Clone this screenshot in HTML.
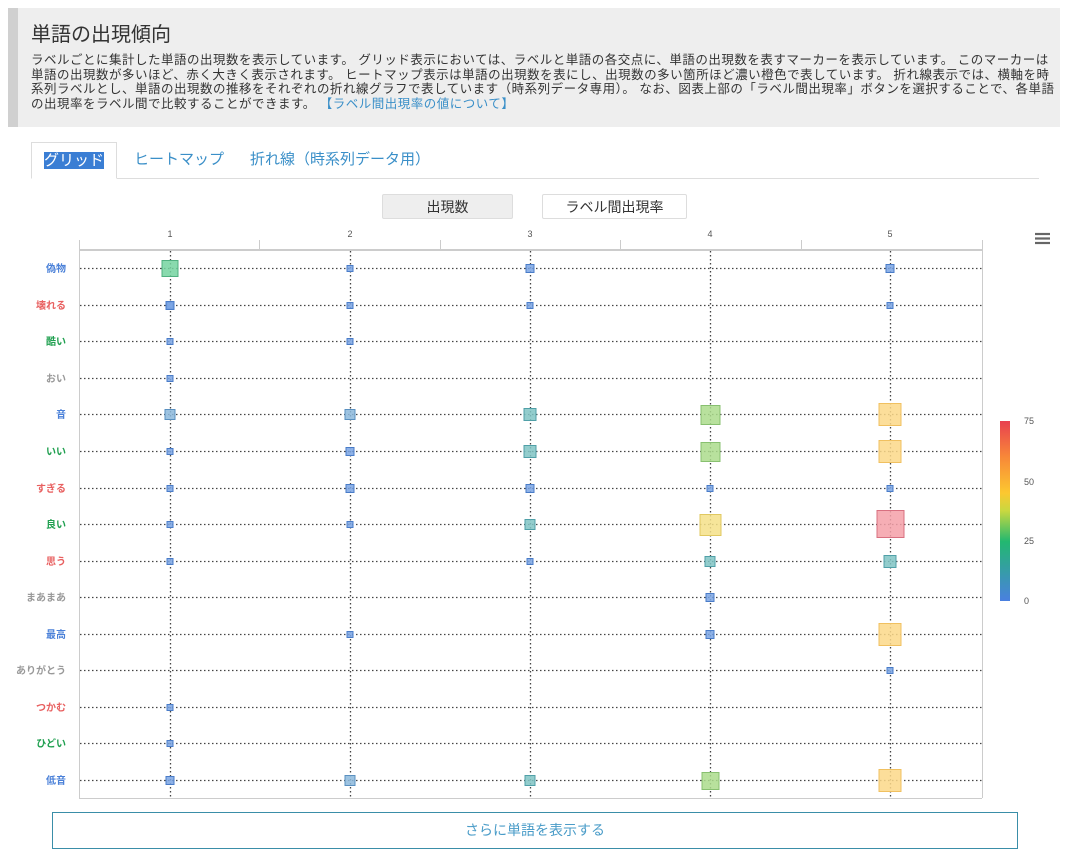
<!DOCTYPE html>
<html><head><meta charset="utf-8"><style>
body{margin:0;background:#fff;font-family:"Liberation Sans","Noto Sans CJK JP",sans-serif;width:1065px;height:861px;overflow:hidden;position:relative}
.hd{position:absolute;left:8px;top:8px;width:1052px;height:119px;background:#eeeeee;border-left:10px solid #d0d0d0;box-sizing:border-box}
.hd h1{margin:0;position:absolute;left:13px;top:10px;font-size:20px;font-weight:normal;color:#333}
.hd p{margin:0;position:absolute;left:13px;top:45px;width:1025px;font-size:12.5px;line-height:14.7px;color:#333;letter-spacing:0.5px}
.hd a{color:#3a8fc8}
.tabline{position:absolute;left:31px;top:178px;width:1008px;border-top:1px solid #ddd}
.tab{position:absolute;top:142px;height:36px;font-size:15px;line-height:36px;color:#3a8fc8}
.tab.on{left:31px;width:86px;border:1px solid #ddd;border-bottom:1px solid #fff;background:#fff;box-sizing:border-box;height:37px;text-align:center}
.tab.on span{background:#3a7ed4;color:#fff}
.btn{position:absolute;top:194px;height:25px;font-size:14px;line-height:25px;text-align:center;color:#333;border:1px solid #ddd;border-radius:2px;box-sizing:border-box}
.more{position:absolute;left:52px;top:812px;width:966px;height:37px;border:1px solid #3a8ea8;box-sizing:border-box;text-align:center;line-height:35px;font-size:14px;color:#4a9cc8}
</style></head><body>
<div class="hd"><h1>単語の出現傾向</h1><p>ラベルごとに集計した単語の出現数を表示しています。 グリッド表示においては、ラベルと単語の各交点に、単語の出現数を表すマーカーを表示しています。 このマーカーは単語の出現数が多いほど、赤く大きく表示されます。 ヒートマップ表示は単語の出現数を表にし、出現数の多い箇所ほど濃い橙色で表しています。 折れ線表示では、横軸を時系列ラベルとし、単語の出現数の推移をそれぞれの折れ線グラフで表しています（時系列データ専用）。 なお、図表上部の「ラベル間出現率」ボタンを選択することで、各単語の出現率をラベル間で比較することができます。 <a>【ラベル間出現率の値について】</a></p></div>
<div class="tabline"></div>
<div class="tab on"><span>グリッド</span></div>
<div class="tab" style="left:134px">ヒートマップ</div>
<div class="tab" style="left:250px">折れ線（時系列データ用）</div>
<div class="btn" style="left:382px;width:131px;background:#eee">出現数</div>
<div class="btn" style="left:542px;width:145px;background:#fff">ラベル間出現率</div>
<svg width="1065" height="861" style="position:absolute;left:0;top:0" font-family="Liberation Sans, Noto Sans CJK JP, sans-serif">
<defs><linearGradient id="g" x1="0" y1="1" x2="0" y2="0"><stop offset="0" stop-color="#4a80e0"/><stop offset="0.33" stop-color="#22b870"/><stop offset="0.5" stop-color="#c8d840"/><stop offset="0.6" stop-color="#fcc830"/><stop offset="0.8" stop-color="#f88838"/><stop offset="1" stop-color="#e84050"/></linearGradient></defs>
<g font-size="9" fill="#555" text-anchor="middle"><text x="170" y="237">1</text><text x="350" y="237">2</text><text x="530" y="237">3</text><text x="710" y="237">4</text><text x="890" y="237">5</text></g>
<g stroke="#ccc"><line x1="79" y1="250" x2="982" y2="250" stroke-width="2"/><line x1="79.5" y1="240" x2="79.5" y2="798"/><line x1="982.5" y1="240" x2="982.5" y2="798"/><line x1="79" y1="798.5" x2="982" y2="798.5"/><line x1="259.5" y1="240" x2="259.5" y2="249"/><line x1="440.5" y1="240" x2="440.5" y2="249"/><line x1="620.5" y1="240" x2="620.5" y2="249"/><line x1="801.5" y1="240" x2="801.5" y2="249"/></g>
<g stroke="#444" stroke-dasharray="1.5,2.5" stroke-width="1.3">
<line x1="80" y1="268.5" x2="982" y2="268.5"/><line x1="80" y1="305.5" x2="982" y2="305.5"/><line x1="80" y1="341.5" x2="982" y2="341.5"/><line x1="80" y1="378.5" x2="982" y2="378.5"/><line x1="80" y1="414.5" x2="982" y2="414.5"/><line x1="80" y1="451.5" x2="982" y2="451.5"/><line x1="80" y1="488.5" x2="982" y2="488.5"/><line x1="80" y1="524.5" x2="982" y2="524.5"/><line x1="80" y1="561.5" x2="982" y2="561.5"/><line x1="80" y1="597.5" x2="982" y2="597.5"/><line x1="80" y1="634.5" x2="982" y2="634.5"/><line x1="80" y1="670.5" x2="982" y2="670.5"/><line x1="80" y1="707.5" x2="982" y2="707.5"/><line x1="80" y1="743.5" x2="982" y2="743.5"/><line x1="80" y1="780.5" x2="982" y2="780.5"/>
<line x1="170.5" y1="251" x2="170.5" y2="798"/><line x1="350.5" y1="251" x2="350.5" y2="798"/><line x1="530.5" y1="251" x2="530.5" y2="798"/><line x1="710.5" y1="251" x2="710.5" y2="798"/><line x1="890.5" y1="251" x2="890.5" y2="798"/></g>
<g font-size="10" font-weight="bold" text-anchor="end">
<text x="66" y="272" fill="#4a80d8">偽物</text><text x="66" y="309" fill="#e86060">壊れる</text><text x="66" y="345" fill="#20a050">酷い</text><text x="66" y="382" fill="#999">おい</text><text x="66" y="418" fill="#4a80d8">音</text><text x="66" y="455" fill="#20a050">いい</text><text x="66" y="492" fill="#e86060">すぎる</text><text x="66" y="528" fill="#20a050">良い</text><text x="66" y="565" fill="#e86060">思う</text><text x="66" y="601" fill="#999">まあまあ</text><text x="66" y="638" fill="#4a80d8">最高</text><text x="66" y="674" fill="#999">ありがとう</text><text x="66" y="711" fill="#e86060">つかむ</text><text x="66" y="747" fill="#20a050">ひどい</text><text x="66" y="784" fill="#4a80d8">低音</text></g>
<g stroke-width="1" fill-opacity="0.85">
<g fill="#7aa4e4" stroke="#4a7cc8">
<rect x="347" y="265.5" width="6" height="6"/><rect x="167" y="302.5" width="6" height="6"/><rect x="347" y="302.5" width="6" height="6"/><rect x="527" y="302.5" width="6" height="6"/><rect x="887" y="302.5" width="6" height="6"/>
<rect x="167" y="338.5" width="6" height="6"/><rect x="347" y="338.5" width="6" height="6"/><rect x="167" y="375.5" width="6" height="6"/><rect x="167" y="448.5" width="6" height="6"/>
<rect x="167" y="485.5" width="6" height="6"/><rect x="707" y="485.5" width="6" height="6"/><rect x="887" y="485.5" width="6" height="6"/>
<rect x="167" y="521.5" width="6" height="6"/><rect x="347" y="521.5" width="6" height="6"/><rect x="167" y="558.5" width="6" height="6"/><rect x="527" y="558.5" width="6" height="6"/>
<rect x="347" y="631.5" width="6" height="6"/><rect x="887" y="667.5" width="6" height="6"/><rect x="167" y="704.5" width="6" height="6"/><rect x="167" y="740.5" width="6" height="6"/>
<rect x="526" y="264.5" width="8" height="8"/><rect x="886" y="264.5" width="8" height="8"/><rect x="166" y="301.5" width="8" height="8"/><rect x="346" y="447.5" width="8" height="8"/><rect x="346" y="484.5" width="8" height="8"/><rect x="526" y="484.5" width="8" height="8"/><rect x="706" y="593.5" width="8" height="8"/><rect x="706" y="630.5" width="8" height="8"/><rect x="166" y="776.5" width="8" height="8"/>
</g>
<g fill="#8cb8dc" stroke="#5a90c0"><rect x="165" y="409.5" width="10" height="10"/><rect x="345" y="409.5" width="10" height="10"/><rect x="345" y="775.5" width="10" height="10"/></g>
<g fill="#80c4c4" stroke="#50a0a8"><rect x="524" y="408.5" width="12" height="12"/><rect x="524" y="445.5" width="12" height="12"/><rect x="525" y="519.5" width="10" height="10"/><rect x="705" y="556.5" width="10" height="10"/><rect x="884" y="555.5" width="12" height="12"/><rect x="525" y="775.5" width="10" height="10"/></g>
<g fill="#74d4a0" stroke="#50b080"><rect x="162" y="260.5" width="16" height="16"/></g>
<g fill="#acdc8c" stroke="#88c070"><rect x="701" y="405.5" width="19" height="19"/><rect x="701" y="442.5" width="19" height="19"/><rect x="702" y="772.5" width="17" height="17"/></g>
<g fill="#f4e088" stroke="#e0c860"><rect x="700" y="514.5" width="21" height="21"/></g>
<g fill="#fcd888" stroke="#f0c060"><rect x="879" y="403.5" width="22" height="22"/><rect x="879" y="440.5" width="22" height="22"/><rect x="879" y="623.5" width="22" height="22"/><rect x="879" y="769.5" width="22" height="22"/></g>
<g fill="#f4a0a8" stroke="#d87080"><rect x="877" y="510.5" width="27" height="27"/></g>
</g>
<rect x="1000" y="421" width="10" height="180" fill="url(#g)"/>
<g font-size="9" fill="#555"><text x="1024" y="424">75</text><text x="1024" y="485">50</text><text x="1024" y="544">25</text><text x="1024" y="604">0</text></g>
<g stroke="#666" stroke-width="2.2"><line x1="1035" y1="234" x2="1050" y2="234"/><line x1="1035" y1="238.5" x2="1050" y2="238.5"/><line x1="1035" y1="243" x2="1050" y2="243"/></g>
</svg>
<div class="more">さらに単語を表示する</div>
</body></html>
